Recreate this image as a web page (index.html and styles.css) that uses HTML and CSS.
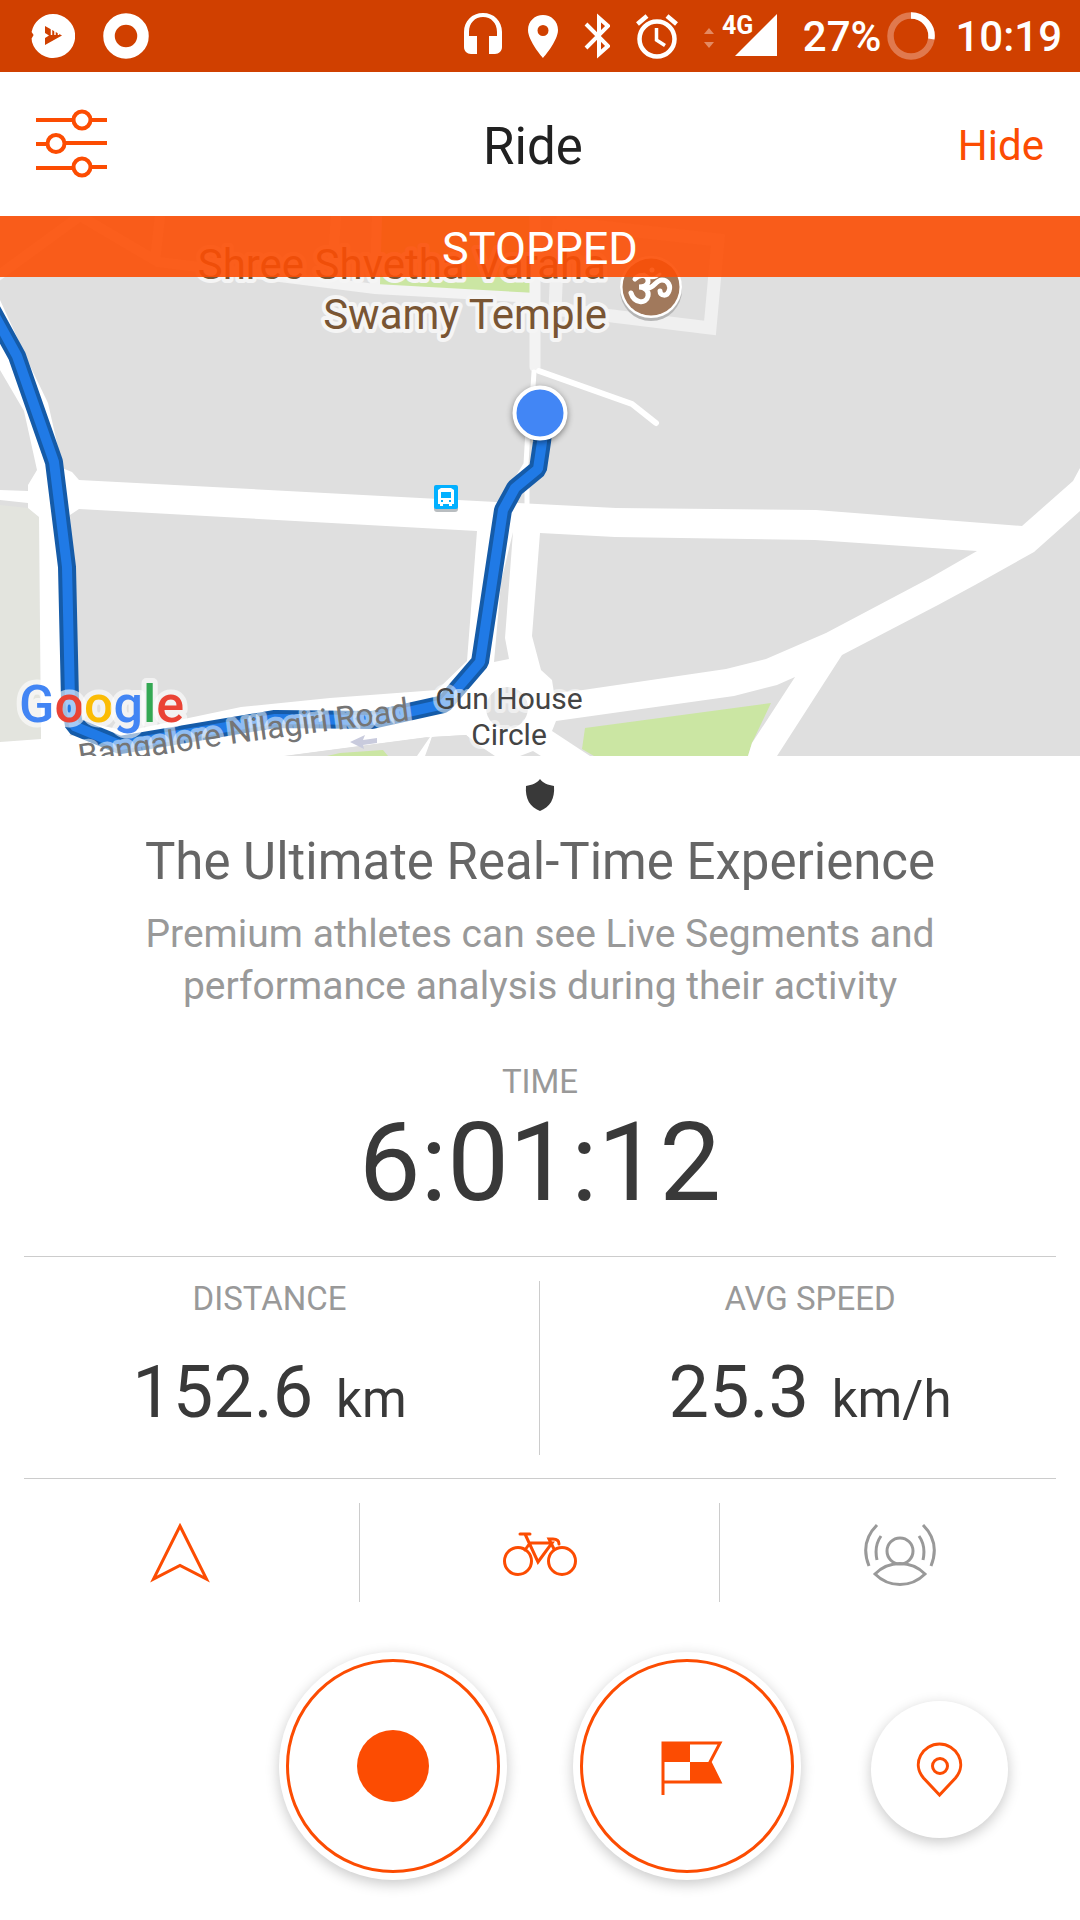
FILE: index.html
```html
<!DOCTYPE html>
<html lang="en">
<head>
<meta charset="utf-8">
<meta name="viewport" content="width=device-width, initial-scale=1">
<title>Ride</title>
<link rel="stylesheet" href="styles.css">
</head>
<body>
<div class="status">
  <div class="status-group">
    <svg width="44" height="46" viewBox="0 0 44 46"><path fill="#fff" d="M22 1a22 22 0 1 1-21 28l-.4-3.500 2-3.500-2-3A22 22 0 0 1 22 1z"/><path fill="#d04000" d="M14 13l17 9.500L14 32v-7l4-2.500-4-2.500z"/><path stroke="#fff" stroke-width="1.500" d="M20.500 14v8M24 15v7M27.500 17v5"/></svg>
    <svg width="46" height="46" viewBox="0 0 46 46"><circle cx="23" cy="23" r="17" fill="none" stroke="#fff" stroke-width="11.500"/></svg>
  </div>
  <div class="status-group">
    <svg width="38" height="46" viewBox="0 0 38 46"><path fill="#fff" d="M19 0C8 0 0 8 0 19v15c0 4 3 7 7 7h6V23H5v-4C5 10 11 4 19 4s14 6 14 15v4h-8v18h6c4 0 7-3 7-7V19C38 8 30 0 19 0z"/></svg>
    <svg width="30" height="46" viewBox="0 0 30 46"><path fill="#fff" fill-rule="evenodd" d="M15 2C7 2 0 8 0 17c0 11 15 28 15 28s15-17 15-28C30 8 23 2 15 2zm0 10a5.500 5.500 0 1 1 0 11 5.500 5.500 0 0 1 0-11z"/></svg>
    <svg width="26" height="46" viewBox="0 0 26 46"><path fill="none" stroke="#fff" stroke-width="4" d="M2 11l22 22-9 8V5l9 8L2 35"/></svg>
    <svg width="42" height="46" viewBox="0 0 42 46"><g fill="none" stroke="#fff" stroke-width="4.500"><circle cx="21" cy="26" r="17.500"/><path d="M1.500 11L11 3M40.500 11L31 3"/><path stroke-width="3.500" d="M20.500 15v12l8.500 5.500"/></g></svg>
    <svg width="73" height="46" viewBox="0 0 73 46"><path fill="#e48a62" d="M0 21l5-6 5 6zM0 29h10l-5 6z"/><path fill="#fff" d="M73 1v42H31z"/><text class="network-label" x="18" y="21">4G</text></svg>
    <div class="battery"><span class="status-text">27%</span>
      <svg width="48" height="48" viewBox="0 0 48 48"><g fill="none" stroke-width="6.500"><circle cx="24" cy="24" r="20.500" stroke="#e0794e"/><path stroke="#fff" d="M24 3.500A20.500 20.500 0 0 1 44.300 27"/></g></svg>
    </div>
    <span class="status-text clock">10:19</span>
  </div>
</div>

<header class="header">
  <button class="plain" type="button" aria-label="Settings">
    <svg width="72" height="70" viewBox="0 0 72 70"><g fill="none" stroke="#fc4c02" stroke-width="4"><path d="M0 11h38M54 11h17M0 35h12M28 34h43M0 59h38M54 58h17"/><circle cx="46" cy="11" r="8.500"/><circle cx="20" cy="34.500" r="8.500"/><circle cx="46" cy="58" r="8.500"/></g></svg>
  </button>
  <h1 class="title">Ride</h1>
  <button class="plain hide" type="button">Hide</button>
</header>

<section class="map" aria-label="Route map">
  <svg class="map-art" viewBox="0 216 1080 540">
    <rect y="216" width="1080" height="540" fill="#dfdfdf"/>
    <path fill="#e3e4de" d="M0 505l28 3 11 9 2 222-41 3z"/>
    <!-- green areas -->
    <g fill="#cbe6a3"><path d="M380 216h150v77l-150-6z"/><path d="M585 728l186-25-19 40-4 13H594l-12-7z"/></g>
    <!-- minor paths -->
    <g fill="none" stroke="#f3f3f3" stroke-width="10">
      <path d="M-5 278l85-62 78 46 122 15 95 12 160 9M160 216l-5 45M336 216l-4 61M377 216l-2 68"/>
      <path stroke="#f0f0f0" stroke-width="13" d="M556 222l162 18-8 88-155-19 4-90"/>
      <path stroke-width="11" stroke-linecap="round" d="M535 210v157"/>
    </g>
    <g fill="none" stroke="#fff" stroke-width="6" stroke-linecap="round" stroke-linejoin="round">
      <path d="M539 371l93 33 24 19"/><path stroke-width="5" d="M534 372l-2 30M528 430l-2 34-12 20M527 480v30"/>
    </g>
    <!-- main roads -->
    <path fill="#fff" d="M0 300l33 72 15 31 9 40 5 25 10 4 7 8 417 22 120 6 200 2 206 16 51-45 7-13v43l-46 41-59 33-37 20-96 50-65 101h-29l4-13 43-66-18 8-43 11-178 25-4 10 38 25h-49l-8-5-13 5h-26l-15-10-13-11-34 2-7 19h-10l13-19-144 19H0v-14l41-3-2-222-11-9v-5l-28-3v-10l28 1v-6l9-15-13-59L0 370z"/>
    <g fill="#dfdfdf">
      <path d="M79 509l398 22-10 130-30 29-107 8-89 9-114 24-47-10-5-80-5-126z"/>
      <path d="M513 532l-8 106 4 21-15 3 7-80z"/>
      <path d="M540 533l75 4 200 3 162 11-47 27-104 55-60 26-40 10-143 21-29 3-2-13-11-10-9-34z"/>
      <path d="M69 736l11-8 6 5zM286 756l144-19-13 19zM432 737l34-2 14 11 15 10h-69z"/>
      <circle cx="507" cy="708" r="21"/>
    </g>
    <path fill="#cbe6a3" d="M327 756l13-3 43-3 5 6z"/>
    <path fill="#c9cbdd" d="M350 742l15-7-2 5 14-2v5l-14 2 1 4z"/>
    <!-- recorded route -->
    <g fill="none" stroke-linejoin="bevel">
      <path stroke="#155ba8" stroke-width="18" d="M-11 305l28 51 37 106 13 105 3 133 4 26 46 19 155-26 97 1 72-16 36-42 23-152 12-22 23-19 4-27 3-28"/>
      <path stroke="#207ae6" stroke-width="10" d="M-11 305l28 51 37 106 13 105 3 133 4 26 46 19 155-26 97 1 72-16 36-42 23-152 12-22 23-19 4-27 3-28"/>
    </g>
    <path id="road-line" fill="none" d="M80 767L231 744L440 716"/>
    <text class="road-name"><textPath href="#road-line">Bangalore Nilagiri Road</textPath></text>
    <g class="place" text-anchor="middle"><text x="509" y="709">Gun House</text><text x="509" y="745">Circle</text></g>
    <g class="temple" text-anchor="end"><text x="606" y="279">Shree Shvetha Varaha</text><text x="607" y="329">Swamy Temple</text></g>
    <!-- temple pin -->
    <circle cx="651" cy="290" r="31" fill="#b5b5b5"/><circle cx="651" cy="287" r="31" fill="#fff"/><circle cx="651" cy="287" r="28.500" fill="#a1795c"/>
    <g fill="none" stroke="#fff" stroke-width="5" stroke-linecap="round"><path d="M635 279c5-6 14-4 13 3-1 5-6 5-9 5 6 0 10 4 9 9-2 9-14 7-17-3M648 288c6 0 8-8 14-8s9 6 7 11c-2 6-9 5-9 0"/><path stroke-width="3" d="M644 274c5 5 11 5 16 0"/></g><circle cx="652" cy="270" r="2.500" fill="#fff"/>
    <!-- bus stop -->
    <rect x="434" y="487" width="24" height="25" rx="3" fill="#b9bdc0"/><rect x="434" y="485" width="24" height="24" rx="2" fill="#03b0ff"/>
    <path fill="#fff" fill-rule="evenodd" d="M441 488h10l3 2v14h-2v2h-3v-2h-6v2h-3v-2h-2v-14zM441 492v6h10v-6zM441 500v2h2v-2zM449 500v2h2v-2z"/>
    <!-- current position -->
    <circle class="position" cx="540" cy="413" r="25.500"/>
    <text class="google" x="19" y="722"><tspan fill="#4285f4">G</tspan><tspan fill="#ea4335">o</tspan><tspan fill="#fbbc05">o</tspan><tspan fill="#4285f4">g</tspan><tspan fill="#34a853">l</tspan><tspan fill="#ea4335">e</tspan></text>
  </svg>
  <div class="banner">STOPPED</div>
</section>

<main>
  <section class="promo">
    <svg width="30" height="32" viewBox="0 0 30 32"><path fill="#393939" d="M15 0c3 4 8 6 14 7 1 13-4 21-14 25C5 28 0 20 1 7 7 6 12 4 15 0z"/></svg>
    <h2 class="promo-title">The Ultimate Real-Time Experience</h2>
    <p class="promo-text">Premium athletes can see Live Segments and performance analysis during their activity</p>
  </section>

  <section class="time">
    <div class="label">TIME</div>
    <div class="time-value">6:01:12</div>
  </section>

  <hr class="rule">

  <section class="stats">
    <div class="stat"><div class="label">DISTANCE</div><div class="value">152.6 <span class="unit">km</span></div></div>
    <div class="stat"><div class="label">AVG SPEED</div><div class="value">25.3 <span class="unit">km/h</span></div></div>
  </section>

  <hr class="rule">

  <nav class="tools">
    <button class="tool" type="button" aria-label="Route">
      <svg width="64" height="64" viewBox="0 0 64 64"><path fill="none" stroke="#fc4c02" stroke-width="3" d="M32 5l26.500 53L32 44.500 5.500 58z"/></svg>
    </button>
    <button class="tool" type="button" aria-label="Activity type">
      <svg width="76" height="64" viewBox="0 0 76 64"><g fill="none" stroke="#fc4c02" stroke-width="3" stroke-linecap="round"><circle cx="16" cy="40" r="13.500"/><circle cx="60" cy="40" r="13.500"/><path d="M18 13h10M23 13l13 28 14-19H28l-5 7M52 28l-5-10h4c4 0 6 2 6 5"/></g></svg>
    </button>
    <button class="tool" type="button" aria-label="Beacon">
      <svg width="74" height="66" viewBox="0 0 74 66"><g fill="none" stroke="#999" stroke-width="3"><circle cx="37" cy="31" r="13"/><path d="M12 54c14-14 36-14 50 0-14 14-36 14-50 0zM14 5C2 17 0 31 6 46M60 5c12 12 14 26 8 41M18 16c-5 7-6 15-4 24M56 16c5 7 6 15 4 24"/></g></svg>
    </button>
  </nav>

  <section class="controls">
    <button class="round" type="button" aria-label="Resume">
      <svg width="228" height="228" viewBox="0 0 228 228"><circle cx="114" cy="114" r="105.500" fill="none" stroke="#fc4c02" stroke-width="3"/><circle cx="114" cy="114" r="36" fill="#fc4c02"/></svg>
    </button>
    <button class="round" type="button" aria-label="Finish">
      <svg width="228" height="228" viewBox="0 0 228 228"><circle cx="114" cy="114" r="105.500" fill="none" stroke="#fc4c02" stroke-width="3"/><path fill="none" stroke="#fc4c02" stroke-width="3" d="M90 143V91h57l-10 19 10 20H90"/><path fill="#fc4c02" d="M90 91h27v19H90zM117 110h20l11 21h-31z"/></svg>
    </button>
    <button class="round round-small" type="button" aria-label="Show location">
      <svg width="60" height="60" viewBox="0 0 60 60"><g fill="none" stroke="#fc4c02" stroke-width="3"><path d="M29.500 56L13.500 39C1 24 13 5 29.500 5S58 24 45.500 39z"/><circle cx="30" cy="27" r="7.500"/></g></svg>
    </button>
  </section>
</main>
</body>
</html>
```

FILE: styles.css
```css
* { box-sizing: border-box; }
body { margin: 0; background: #fff; font-family: Roboto, sans-serif; color: #393939; }
svg { display: block; }
button { font: inherit; color: inherit; background: none; border: 0; padding: 0; cursor: pointer; }
h1, h2, p { margin: 0; font-weight: 400; }

.status { display: flex; justify-content: space-between; align-items: center; height: 72px; padding: 0 18px 0 31px; background: #d04000; color: #fff; font-size: 42px; font-weight: 500; line-height: 48px; }
.status-group { display: flex; align-items: center; gap: 26px; }
.status-group:first-child { gap: 28px; }
.battery { display: flex; align-items: center; gap: 6px; }
.status-text { padding-top: 2px; }
.clock { margin-left: -6px; }
.network-label { font-size: 25px; font-weight: 700; fill: #fff; }

.header { display: flex; justify-content: space-between; align-items: center; height: 144px; padding: 0 36px; }
.title { padding-top: 5px; font-size: 51px; line-height: 60px; color: #212121; }
.hide { padding-top: 4px; color: #fc4c02; font-size: 42px; line-height: 48px; }

.map { position: relative; overflow: hidden; }
.map-art { width: 100%; height: auto; }
.banner { position: absolute; top: 0; left: 0; right: 0; padding: 6px 0 2px; background: rgba(252, 78, 4, .9); color: #fff; font-size: 45px; line-height: 53px; text-align: center; }
.road-name, .place, .temple, .google { paint-order: stroke; stroke-linejoin: round; }
.road-name { font-size: 32px; fill: #757575; stroke: rgba(255, 255, 255, .5); stroke-width: 8px; }
.place { font-size: 30px; fill: #444; stroke: rgba(255, 255, 255, .5); stroke-width: 8px; }
.temple { font-size: 42px; fill: #795533; stroke: #f5f5f5; stroke-width: 8px; }
.google { font-size: 52px; font-weight: 500; stroke: rgba(255, 255, 255, .6); stroke-width: 10px; }
.position { fill: #4286f5; stroke: #fff; stroke-width: 4px; filter: drop-shadow(0 2px 3px rgba(0, 0, 0, .45)); }

.promo { display: flex; flex-direction: column; align-items: center; padding: 23px 24px 0; text-align: center; }
.promo-title { margin-top: 21px; font-size: 51px; line-height: 60px; color: #666; }
.promo-text { max-width: 840px; margin-top: 16px; font-size: 39px; line-height: 52px; color: #999; }

.label { font-size: 33px; line-height: 36px; color: #999; }
.time { padding: 52px 24px 30px; text-align: center; }
.time-value { font-size: 110px; line-height: 126px; }
.rule { height: 1px; margin: 0 24px; border: 0; background: #ccc; }

.stats { display: grid; grid-template-columns: 1fr 1fr; padding: 24px 0 23px; text-align: center; }
.stat { padding-bottom: 20px; }
.stat:first-child { border-right: 1px solid #ccc; }
.value { margin-top: 34px; font-size: 72px; line-height: 84px; }
.unit { margin-left: 5px; font-size: 51px; line-height: 60px; }

.tools { display: grid; grid-template-columns: repeat(3, 1fr); padding: 24px 0 50px; }
.tool { display: flex; justify-content: center; align-items: center; height: 99px; }
.tool:not(:last-child) { border-right: 1px solid #ccc; }

.controls { display: flex; justify-content: flex-end; align-items: center; gap: 66px; padding: 0 72px 40px 24px; }
.round { display: flex; flex: none; justify-content: center; align-items: center; width: 228px; height: 228px; border-radius: 50%; background: #fff; box-shadow: 0 4px 14px rgba(0, 0, 0, .22); }
.round-small { width: 137px; height: 137px; margin: 6px 0 0 4px; }
```
